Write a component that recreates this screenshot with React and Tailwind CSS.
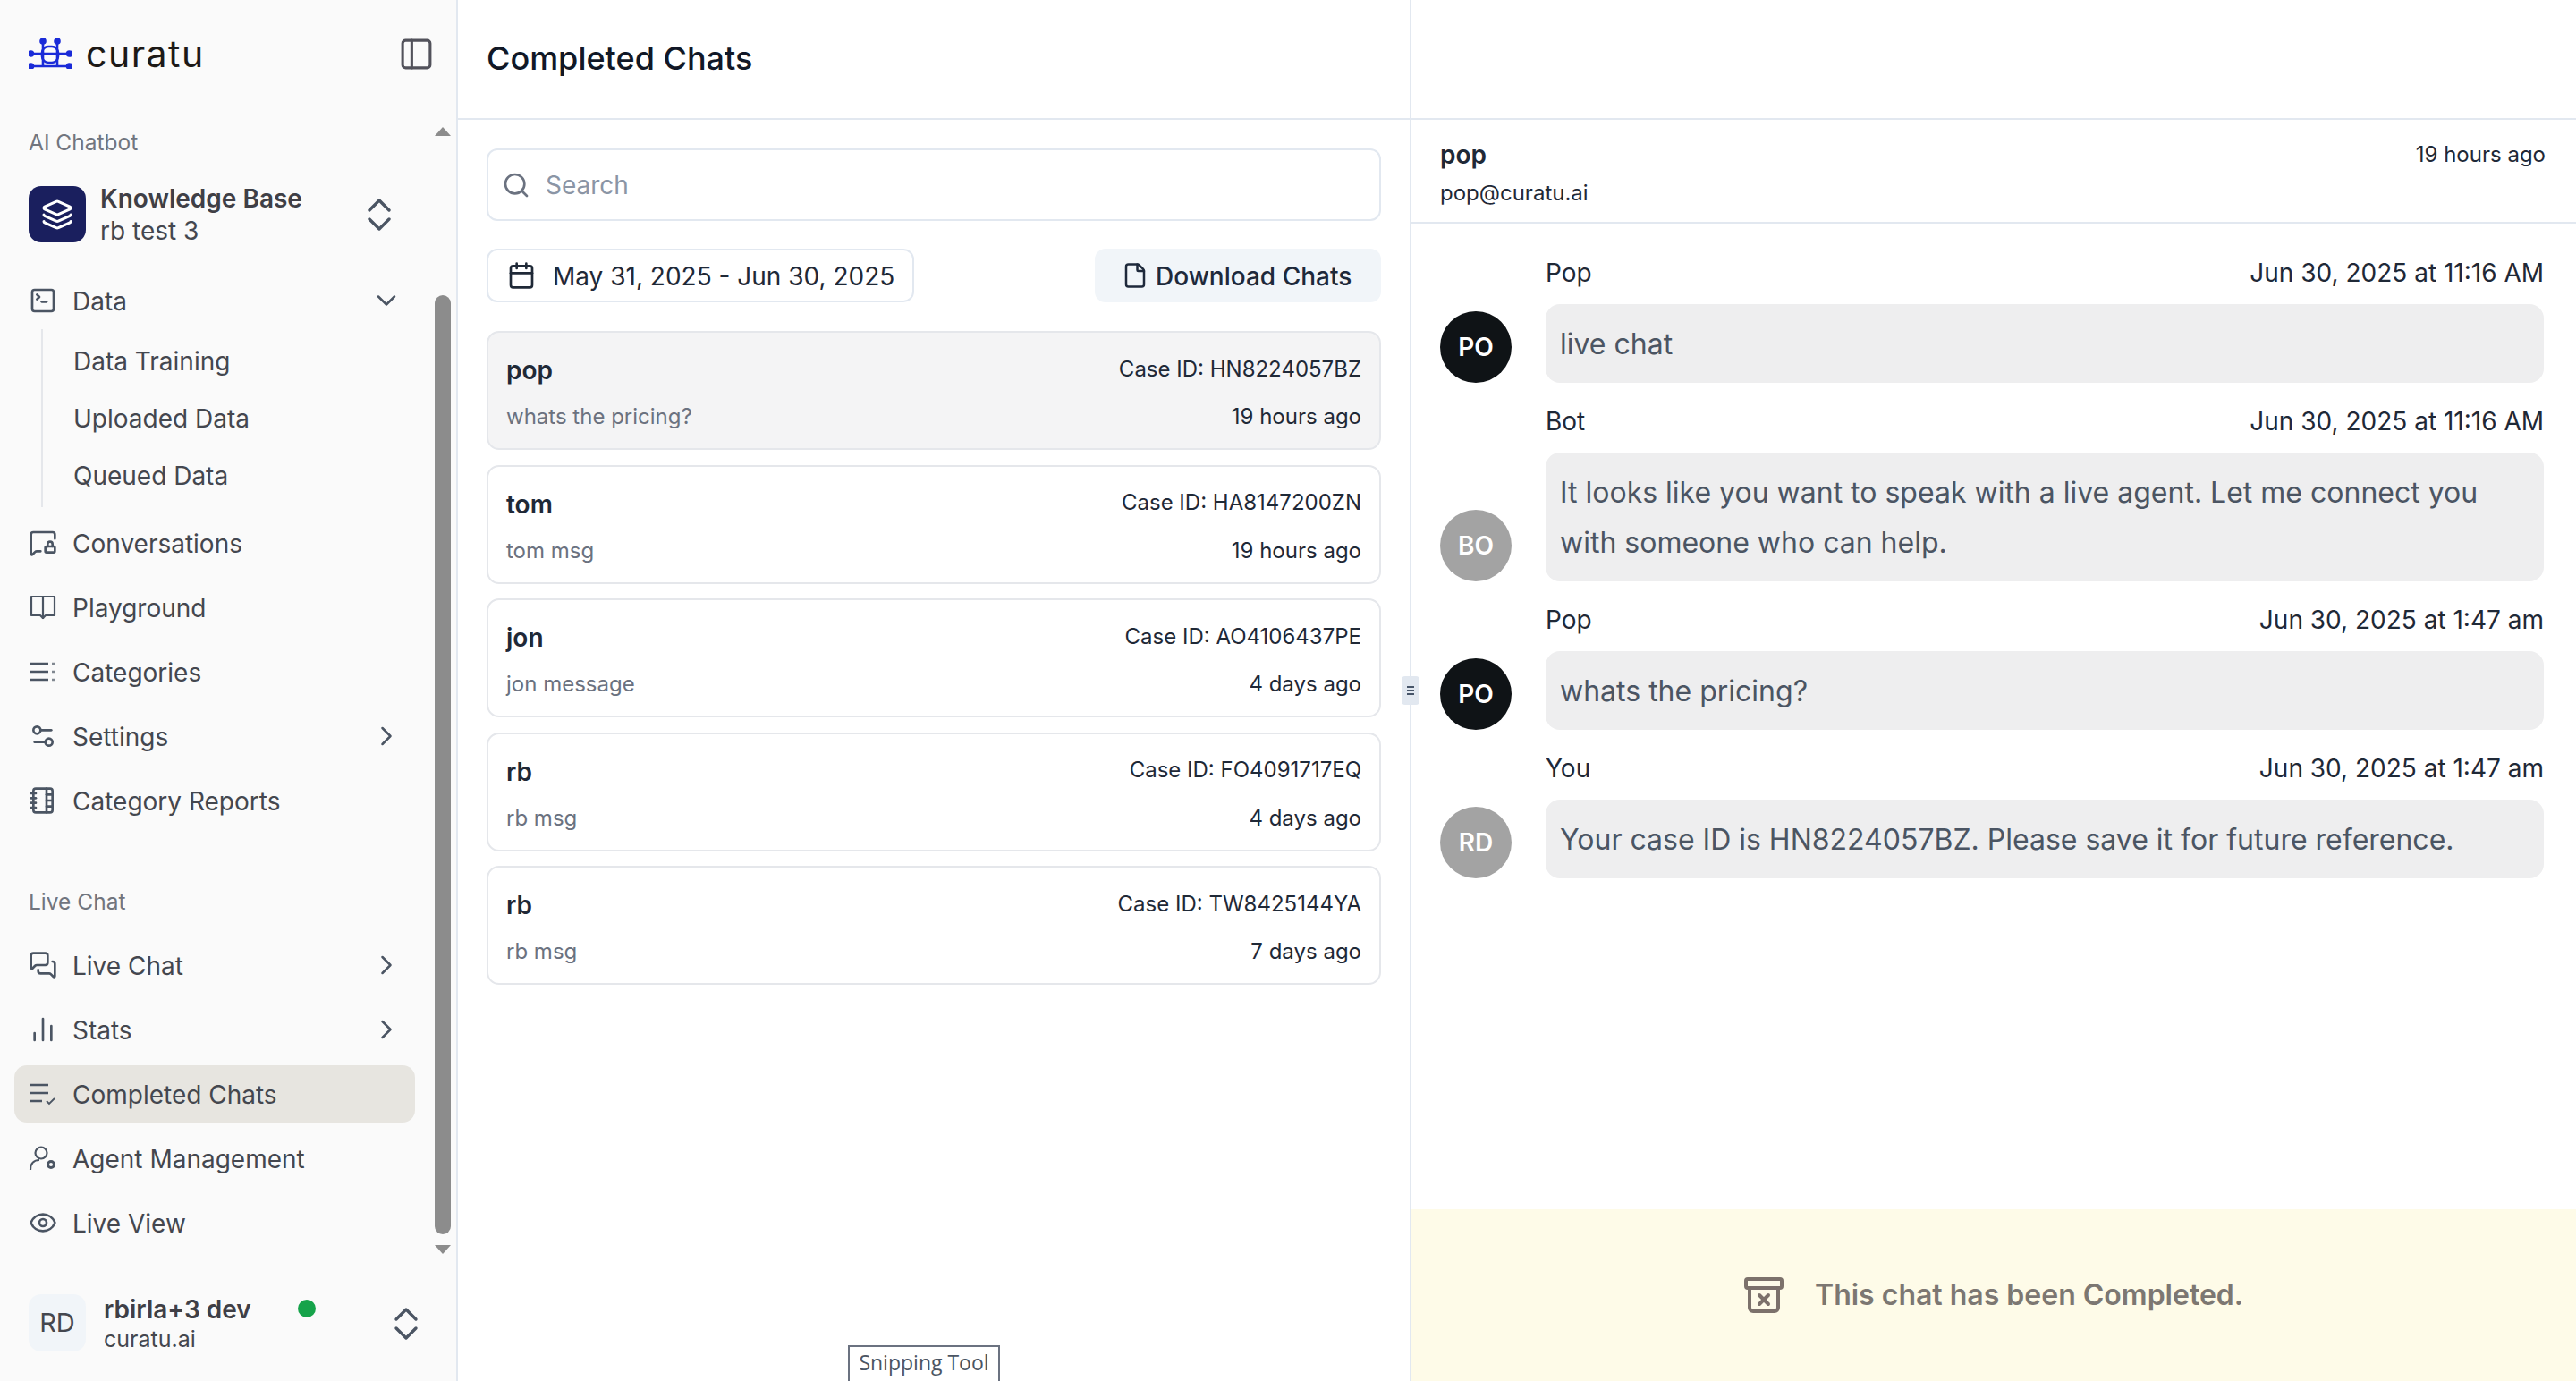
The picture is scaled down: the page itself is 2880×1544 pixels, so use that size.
import {
  ArchiveX, Calendar, ChartNoAxesColumn, ChevronDown, ChevronRight, Eye, File, Layers,
  MessageSquareLock, MessagesSquare, NotebookTabs, PanelLeft, Search, Settings2, SquareTerminal,
} from 'lucide-react';

const UpDownIcon = ({ className }) => (
  <svg className={className} viewBox="0 0 28 38" fill="none" stroke="currentColor" strokeWidth="3.4" strokeLinecap="round" strokeLinejoin="round">
    <path d="M3 14L14 3l11 11M3 24l11 11 11-11" />
  </svg>
);

const BookIcon = ({ className }) => (
  <svg className={className} viewBox="-2 -2 32 32" fill="none" stroke="currentColor" strokeWidth="2.2" strokeLinejoin="round">
    <path d="M1 2h26v21H17l-3 3-3-3H1z" />
    <path d="M14 2v25" />
  </svg>
);

const CategoriesIcon = ({ className }) => (
  <svg className={className} viewBox="-2 -2 32 32" fill="none" stroke="currentColor" strokeWidth="2.6">
    <path d="M0 5h20M0 14h20M0 23h20" />
    <path d="M24 5h4M24 14h4M24 23h4" strokeOpacity="0.7" />
  </svg>
);

const CompletedIcon = ({ className }) => (
  <svg className={className} viewBox="-2 -2 32 32" fill="none" stroke="currentColor" strokeWidth="2.6">
    <path d="M0 4h20M0 13h20M0 22h13" />
    <path d="M18 22l3 3 6-6" strokeWidth="1.8" />
  </svg>
);

const AgentIcon = ({ className }) => (
  <svg className={className} viewBox="-2 -2 32 32" fill="none" stroke="currentColor" strokeWidth="2.2">
    <circle cx="12" cy="8" r="6.5" />
    <path d="M0 27c0-7 4-11 10-11" />
    <circle cx="23" cy="21" r="3.5" strokeWidth="3" />
  </svg>
);

const Logo = () => (
  <svg className="h-[34px] w-[48px]" viewBox="0 0 48 34" fill="none" stroke="#1a2bd8" strokeWidth="2.6">
    <path d="M2 17h44M2 31h44M16 3v28M32 3v28" />
    <rect x="15" y="9" width="18" height="18" rx="7" />
    <circle cx="16" cy="3" r="2.5" fill="#1a2bd8" />
    <circle cx="32" cy="3" r="2.5" fill="#1a2bd8" />
    <circle cx="2.5" cy="17" r="2.5" fill="#1a2bd8" />
    <circle cx="45.5" cy="17" r="2.5" fill="#1a2bd8" />
    <circle cx="2.5" cy="31" r="2.5" fill="#1a2bd8" />
    <circle cx="45.5" cy="31" r="2.5" fill="#1a2bd8" />
  </svg>
);

const NavRow = ({ icon: Icon, label, chevron, active }) => (
  <div className={`flex h-[64px] w-[448px] items-center rounded-[14px] pl-[16px] pr-[14px] ${active ? 'bg-[#e7e5e0]' : ''}`}>
    <Icon className="h-[32px] w-[32px] shrink-0 text-[#4b5563]" strokeWidth={2} />
    <span className="ml-[17px] flex-1 pt-[2px] text-[28px] text-[#44474f]">{label}</span>
    {chevron === 'right' && <ChevronRight className="h-[36px] w-[36px] text-[#4b5563]" strokeWidth={1.7} />}
    {chevron === 'down' && <ChevronDown className="h-[36px] w-[36px] text-[#4b5563]" strokeWidth={1.7} />}
  </div>
);

const Sidebar = () => (
  <aside className="flex h-full w-[512px] shrink-0 flex-col border-r-2 border-[#e2e8f0] bg-[#fafafa]">
    <div className="flex h-[130px] shrink-0 items-start pl-[32px] pr-[24px] pt-[43px]">
      <Logo />
      <span className="ml-[16px] text-[41px] leading-[34px] tracking-[1.5px] text-[#1c1917]">curatu</span>
      <PanelLeft className="ml-auto -mt-[3px] h-[41px] w-[41px] text-[#52525b]" strokeWidth={1.8} />
    </div>

    <div className="flex min-h-0 flex-1">
      <nav className="flex w-[480px] flex-col pl-[16px]">
        <div className="mt-[3px] flex h-[52px] shrink-0 items-center pl-[16px] text-[24.5px] text-[#71757e]">AI Chatbot</div>
        <div className="mt-[20px] flex h-[69px] shrink-0 items-center pl-[16px] pr-[42px]">
          <div className="flex h-[63px] w-[64px] items-center justify-center rounded-[14px] bg-[#1a1f5e]">
            <Layers className="h-[36px] w-[36px] text-white" strokeWidth={2} />
          </div>
          <div className="ml-[16px] flex-1">
            <div className="text-[28px] font-semibold leading-[36px] text-[#3f3f46]">Knowledge Base</div>
            <div className="text-[28px] leading-[36px] text-[#44474f]">rb test 3</div>
          </div>
          <UpDownIcon className="h-[38px] w-[28px] text-[#4b5563]" />
        </div>

        <div className="mt-[30px]">
          <NavRow icon={SquareTerminal} label="Data" chevron="down" />
        </div>
        <div className="ml-[30px] flex h-[199px] shrink-0 flex-col border-l-2 border-[#e5e7eb] pl-[34px] pt-[4px] text-[28px] text-[#44474f]">
          <div className="flex h-[64px] shrink-0 items-center">Data Training</div>
          <div className="flex h-[64px] shrink-0 items-center">Uploaded Data</div>
          <div className="flex h-[64px] shrink-0 items-center">Queued Data</div>
        </div>

        <div className="mt-[8px] flex flex-col gap-[8px]">
          <NavRow icon={MessageSquareLock} label="Conversations" />
          <NavRow icon={BookIcon} label="Playground" />
          <NavRow icon={CategoriesIcon} label="Categories" />
          <NavRow icon={Settings2} label="Settings" chevron="right" />
          <NavRow icon={NotebookTabs} label="Category Reports" />
        </div>

        <div className="mt-[55px] flex h-[52px] shrink-0 items-center pl-[16px] text-[24.5px] text-[#71757e]">Live Chat</div>
        <div className="mt-[13px] flex flex-col gap-[8px]">
          <NavRow icon={MessagesSquare} label="Live Chat" chevron="right" />
          <NavRow icon={ChartNoAxesColumn} label="Stats" chevron="right" />
          <NavRow icon={CompletedIcon} label="Completed Chats" active />
          <NavRow icon={AgentIcon} label="Agent Management" />
          <NavRow icon={Eye} label="Live View" />
        </div>
      </nav>

      {/* scrollbar */}
      <div className="flex w-[30px] flex-col items-center pl-[6px] pr-[6px] pt-[12px]">
        <svg className="h-[10px] w-[18px] shrink-0" viewBox="0 0 18 10"><path d="M9 0l9 10H0z" fill="#8c8c8c" /></svg>
        <div className="mt-[178px] h-[1050px] w-[18px] shrink-0 rounded-[9px] bg-[#8c8c8c]" />
        <svg className="mt-[12px] h-[10px] w-[18px] shrink-0" viewBox="0 0 18 10"><path d="M0 0h18L9 10z" fill="#8c8c8c" /></svg>
      </div>
    </div>

    <div className="flex h-[129px] shrink-0 items-start pl-[32px] pt-[31px]">
      <div className="mt-[1px] flex h-[64px] w-[64px] items-center justify-center rounded-[14px] bg-[#f1f5f9] text-[29px] text-[#44474f]">RD</div>
      <div className="ml-[20px] w-[170px]">
        <div className="whitespace-nowrap text-[28px] font-semibold leading-[36px] text-[#3f3f46]">rbirla+3 dev</div>
        <div className="text-[25px] leading-[30px] text-[#44474f]">curatu.ai</div>
      </div>
      <div className="ml-[47px] mt-[7px] h-[20px] w-[20px] rounded-full bg-[#16a34a]" />
      <UpDownIcon className="ml-[87px] mt-[15px] h-[38px] w-[28px] text-[#4b5563]" />
    </div>
  </aside>
);

const chats = [
  { name: 'pop', caseId: 'HN8224057BZ', msg: 'whats the pricing?', time: '19 hours ago', active: true },
  { name: 'tom', caseId: 'HA8147200ZN', msg: 'tom msg', time: '19 hours ago' },
  { name: 'jon', caseId: 'AO4106437PE', msg: 'jon message', time: '4 days ago' },
  { name: 'rb', caseId: 'FO4091717EQ', msg: 'rb msg', time: '4 days ago' },
  { name: 'rb', caseId: 'TW8425144YA', msg: 'rb msg', time: '7 days ago' },
];

const ChatList = () => (
  <section className="relative flex h-full w-[1066px] shrink-0 flex-col border-r-2 border-[#e2e8f0] bg-white">
    <div className="flex h-[134px] shrink-0 items-center border-b-2 border-[#e2e8f0] pb-[3px] pl-[32px] text-[36px] font-medium text-[#111827]">
      Completed Chats
    </div>
    <div className="flex flex-col pl-[32px] pr-[32px] pt-[32px]">
      <div className="flex h-[81px] items-center rounded-[12px] border-2 border-[#e2e8f0] pl-[15px]">
        <Search className="h-[32px] w-[32px] text-[#6b7280]" strokeWidth={2} />
        <span className="ml-[17px] text-[28px] text-[#8b95a5]">Search</span>
      </div>
      <div className="mt-[31px] flex items-center justify-between">
        <div className="flex h-[60px] w-[478px] items-center rounded-[12px] border-2 border-[#e2e8f0] pl-[21px]">
          <Calendar className="h-[32px] w-[32px] text-[#1f2937]" strokeWidth={2} />
          <span className="ml-[19px] whitespace-nowrap pt-[2px] text-[28px] text-[#1f2937]">May 31, 2025 - Jun 30, 2025</span>
        </div>
        <div className="flex h-[60px] w-[320px] items-center rounded-[12px] bg-[#f1f5f9] pl-[30px]">
          <File className="h-[30px] w-[30px] text-[#1e293b]" strokeWidth={2} />
          <span className="ml-[8px] whitespace-nowrap pt-[2px] text-[28px] font-medium text-[#1e293b]">Download Chats</span>
        </div>
      </div>
      <div className="mt-[32px] flex flex-col gap-[16.5px]">
        {chats.map((chat) => (
          <div
            key={chat.caseId}
            className={`h-[133px] rounded-[14px] border-2 border-[#e5e7eb] px-[20px] pt-[20px] ${chat.active ? 'bg-[#f4f4f5]' : 'bg-white'}`}
          >
            <div className="flex items-center justify-between">
              <span className="text-[28px] font-semibold leading-[44px] text-[#1f2937]">{chat.name}</span>
              <span className="-mt-[3px] text-[24px] leading-[36px] text-[#1f2937]">Case ID: {chat.caseId}</span>
            </div>
            <div className="mt-[12px] flex items-center justify-between text-[24px] leading-[36px]">
              <span className="text-[#6b7280]">{chat.msg}</span>
              <span className="text-[#1f2937]">{chat.time}</span>
            </div>
          </div>
        ))}
      </div>
    </div>
    {/* resize handle */}
    <div className="absolute right-[-11px] top-[756px] flex h-[32px] w-[20px] flex-col items-center justify-center gap-[2px] rounded-[4px] bg-[#e2e8f0]">
      <div className="h-[2px] w-[8px] bg-[#475569]" />
      <div className="h-[2px] w-[8px] bg-[#475569]" />
      <div className="h-[2px] w-[8px] bg-[#475569]" />
    </div>
    {/* taskbar tooltip */}
    <div className="absolute bottom-0 left-[436px] flex h-[40px] w-[170px] items-center justify-center border-2 border-b-0 border-[#6b7280] bg-white pb-[3px] font-['Open_Sans',sans-serif] text-[23px] text-[#4b5563]">
      Snipping Tool
    </div>
  </section>
);

const messages = [
  { who: 'Pop', at: 'Jun 30, 2025 at 11:16 AM', text: 'live chat', initials: 'PO', dark: true },
  { who: 'Bot', at: 'Jun 30, 2025 at 11:16 AM', text: 'It looks like you want to speak with a live agent. Let me connect you with someone who can help.', initials: 'BO' },
  { who: 'Pop', at: 'Jun 30, 2025 at 1:47 am', text: 'whats the pricing?', initials: 'PO', dark: true },
  { who: 'You', at: 'Jun 30, 2025 at 1:47 am', text: 'Your case ID is HN8224057BZ. Please save it for future reference.', initials: 'RD' },
];

const Message = ({ who, at, text, initials, dark }) => (
  <div className="flex items-end">
    <div className={`flex h-[80px] w-[80px] shrink-0 items-center justify-center rounded-full text-[28px] font-semibold text-white ${dark ? 'bg-[#0f1316]' : 'bg-[#a3a3a3]'}`}>
      {initials}
    </div>
    <div className="ml-[38px] flex-1">
      <div className="flex h-[36px] items-center justify-between text-[28px] text-[#1f2937]">
        <span>{who}</span>
        <span>{at}</span>
      </div>
      <div className="mt-[17px] rounded-[16px] bg-[#eeeeef] px-[16px] pb-[15px] pt-[17px] text-[32px] leading-[56px] text-[#4b5563]">
        {text}
      </div>
    </div>
  </div>
);

const ChatDetail = () => (
  <section className="flex h-full flex-1 flex-col bg-white">
    <div className="h-[134px] shrink-0 border-b-2 border-[#e2e8f0]" />
    <div className="flex h-[116px] shrink-0 justify-between border-b-2 border-[#e2e8f0] pl-[32px] pr-[34px] pt-[19px]">
      <div>
        <div className="text-[28px] font-semibold leading-[40px] text-[#1f2937]">pop</div>
        <div className="mt-[3px] text-[24px] leading-[40px] text-[#1f2937]">pop@curatu.ai</div>
      </div>
      <div className="text-[24px] leading-[40px] text-[#1f2937]">19 hours ago</div>
    </div>
    <div className="flex flex-1 flex-col gap-[25px] pl-[32px] pr-[36px] pt-[37px]">
      {messages.map((m, i) => (
        <Message key={i} {...m} />
      ))}
    </div>
    <div className="flex h-[192px] shrink-0 items-center bg-[#fefbe8] pl-[370px]">
      <ArchiveX className="h-[48px] w-[48px] text-[#7c716b]" strokeWidth={2} />
      <span className="ml-[33px] text-[32px] font-semibold text-[#7c7772]">This chat has been Completed.</span>
    </div>
  </section>
);

export default function App() {
  return (
    <div className="flex h-[1544px] w-[2880px] overflow-hidden bg-white font-['Inter',sans-serif]">
      <Sidebar />
      <ChatList />
      <ChatDetail />
    </div>
  );
}
